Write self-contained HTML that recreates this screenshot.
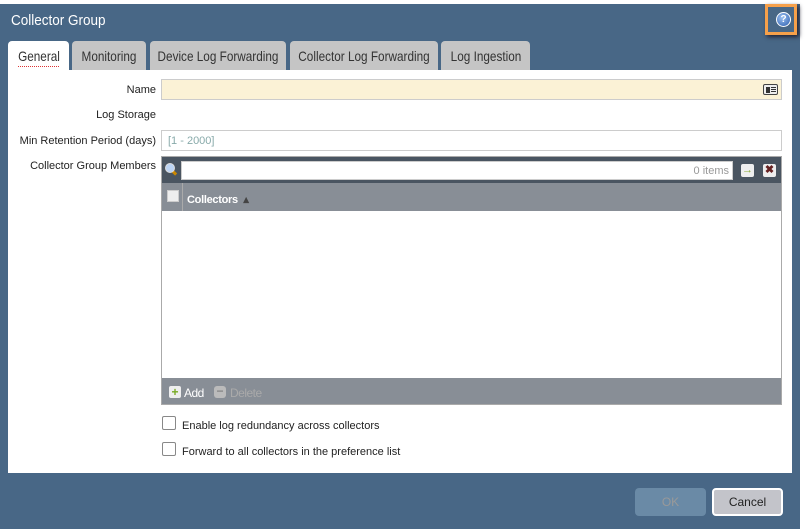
<!DOCTYPE html>
<html><head><style>
*{margin:0;padding:0;box-sizing:border-box}
body{width:806px;height:530px;background:#fff;position:relative;overflow:hidden;font-family:"Liberation Sans",sans-serif}
.dlg{position:absolute;left:0;top:4px;width:800px;height:525px;background:#486786}
.title{position:absolute;left:11px;top:12px;color:#fff;font-size:15px;transform:scaleX(0.9);transform-origin:left}
.help{position:absolute;left:765px;top:4px;width:32px;height:31px;border:3px solid #f6a04a;box-shadow:2px 2px 4px #223}
.help .c{position:absolute;left:8px;top:5px;width:15px;height:15px;border-radius:50%;background:radial-gradient(circle at 40% 35%,#9cc0f0,#2c5fb0);border:1px solid #fff;color:#fff;font-size:10px;font-weight:bold;text-align:center;line-height:13px}
.tab{position:absolute;top:41px;height:30px;background:#c5c5c5;border-radius:4px 4px 0 0;font-size:14px;color:#333;line-height:30px;white-space:nowrap}
.tab span{position:absolute;left:50%;transform:translateX(-50%) scaleX(0.84)}
.tab.a{background:#fff}
.panel{position:absolute;left:8px;top:70px;width:784px;height:403px;background:#fff}
.lbl{position:absolute;right:650px;font-size:11px;color:#222;white-space:nowrap}
.inp{position:absolute;left:161px;width:621px;height:21px;border:1px solid #ccc}
.grid{position:absolute;left:161px;top:156px;width:621px;height:249px;border:1px solid #aaa;background:#fff}
.cb{position:absolute;width:14px;height:14px;border:1px solid #888;border-radius:2px;background:#fff}
.btn{position:absolute;top:488px;height:28px;border-radius:4px;font-size:12px;text-align:center;line-height:28px}
</style></head><body>
<div class="dlg"></div>
<div class="title">Collector Group</div>
<div class="help"><div class="c">?</div></div>
<div class="tab a" style="left:8px;width:61px"><span>General</span><div style="position:absolute;left:10px;right:10px;top:25px;border-top:1px dotted #d33"></div></div>
<div class="tab" style="left:72px;width:74px"><span>Monitoring</span></div>
<div class="tab" style="left:150px;width:136px"><span>Device Log Forwarding</span></div>
<div class="tab" style="left:290px;width:148px"><span>Collector Log Forwarding</span></div>
<div class="tab" style="left:441px;width:89px"><span>Log Ingestion</span></div>
<div class="panel"></div>
<div class="lbl" style="top:84px">Name</div>
<div class="inp" style="top:79px;background:#fbf2d6"><div style="position:absolute;right:3px;top:4px;width:15px;height:11px;border:1px solid #444;border-radius:2px;background:#eee"><div style="position:absolute;left:2px;top:2px;width:4px;height:6px;background:#333"></div><div style="position:absolute;left:7px;top:2px;width:5px;height:1px;background:#333;box-shadow:0 2px #333,0 4px #333"></div></div></div>
<div class="lbl" style="top:109px">Log Storage</div>
<div class="lbl" style="top:135px">Min Retention Period (days)</div>
<div class="inp" style="top:130px;font-size:11px;color:#8aa;line-height:20px;padding-left:6px">[1 - 2000]</div>
<div class="lbl" style="top:160px">Collector Group Members</div>
<div class="grid">
 <div style="position:absolute;left:0;top:0;width:619px;height:26px;background:#4a5561"></div>
 <div style="position:absolute;left:9px;top:14px;width:6px;height:3px;background:#c80;transform:rotate(45deg)"></div>
 <div style="position:absolute;left:3px;top:6px;width:10px;height:10px;border-radius:50%;background:#bcd4f4;border:1px solid #ddd"></div>
 <div style="position:absolute;left:19px;top:4px;width:552px;height:19px;background:#fff;border:1px solid #ccc;font-size:11px;color:#999;text-align:right;padding-right:3px;line-height:19px">0 items</div>
 <div style="position:absolute;left:579px;top:7px;width:13px;height:13px;background:#eee;border-radius:2px;color:#8a3;font-size:11px;line-height:13px;text-align:center;font-weight:bold">→</div>
 <div style="position:absolute;left:601px;top:7px;width:13px;height:13px;background:#eee;border-radius:2px;color:#622;font-size:11px;line-height:13px;text-align:center;font-weight:bold">✖</div>
 <div style="position:absolute;left:0;top:26px;width:619px;height:28px;background:#888e96"></div>
 <div style="position:absolute;left:20px;top:26px;width:1px;height:28px;background:#aaa"></div>
 <div style="position:absolute;left:5px;top:33px;width:12px;height:12px;background:#eee;border:1px solid #ccc"></div>
 <div style="position:absolute;left:25px;top:36px;color:#fff;font-size:11px;font-weight:bold;letter-spacing:-0.3px;white-space:nowrap">Collectors&nbsp; <span style="color:#444">▴</span></div>
 <div style="position:absolute;left:0;top:221px;width:619px;height:26px;background:#888e96"></div>
 <div style="position:absolute;left:7px;top:229px;width:12px;height:12px;background:#eee;border-radius:2px;color:#7a2;font-size:12px;line-height:12px;text-align:center;font-weight:bold">+</div>
 <div style="position:absolute;left:22px;top:229px;color:#fff;font-size:12px;letter-spacing:-0.5px">Add</div>
 <div style="position:absolute;left:52px;top:229px;width:12px;height:12px;background:#bbb;border-radius:3px;color:#888;font-size:12px;line-height:11px;text-align:center;font-weight:bold">−</div>
 <div style="position:absolute;left:68px;top:229px;color:#aaa;font-size:12px;letter-spacing:-0.5px">Delete</div>
</div>
<div class="cb" style="left:162px;top:416px"></div>
<div style="position:absolute;left:182px;top:420px;font-size:11px;color:#222">Enable log redundancy across collectors</div>
<div class="cb" style="left:162px;top:442px"></div>
<div style="position:absolute;left:182px;top:446px;font-size:11px;color:#222">Forward to all collectors in the preference list</div>
<div class="btn" style="left:635px;width:71px;background:#6a8aa6;color:#999">OK</div>
<div class="btn" style="left:712px;width:71px;background:#c3c4ca;border:2px solid #fff;line-height:24px;color:#222">Cancel</div>
</body></html>
